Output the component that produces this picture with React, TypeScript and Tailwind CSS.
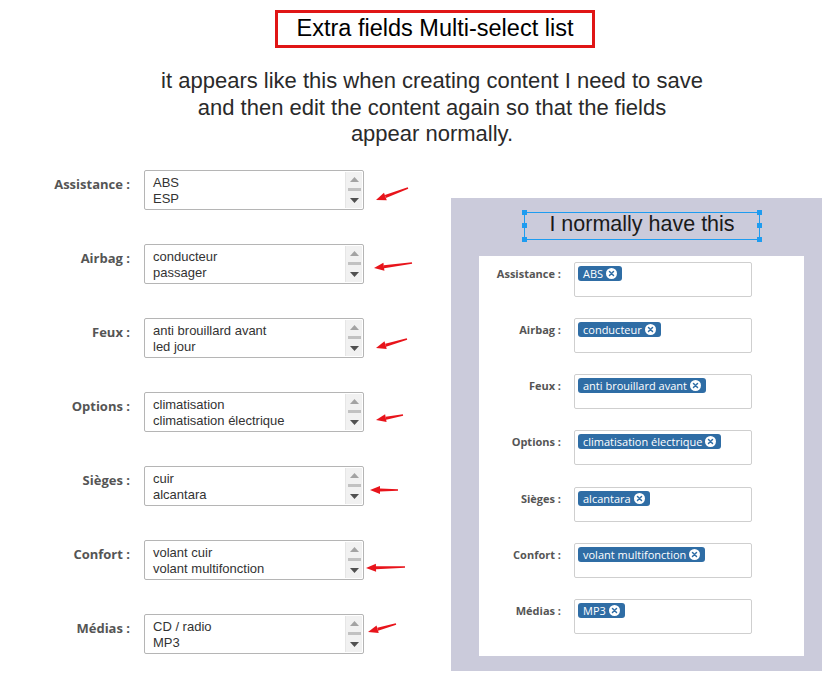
type Arrow = [number, number, number, number]

const leftRows: { label: string; options: string[]; arrow: Arrow }[] = [
  { label: 'Assistance :', options: ['ABS', 'ESP'], arrow: [264, 18, 232, 30] },
  { label: 'Airbag :', options: ['conducteur', 'passager'], arrow: [268, 19, 230, 24] },
  { label: 'Feux :', options: ['anti brouillard avant', 'led jour'], arrow: [263, 21, 232, 30] },
  { label: 'Options :', options: ['climatisation', 'climatisation électrique'], arrow: [259, 23, 232, 28] },
  { label: 'Sièges :', options: ['cuir', 'alcantara'], arrow: [254, 24, 226, 24] },
  { label: 'Confort :', options: ['volant cuir', 'volant multifonction'], arrow: [261, 27, 222, 28] },
  { label: 'Médias :', options: ['CD / radio', 'MP3'], arrow: [252, 10, 224, 18] },
]

const rightRows = [
  { label: 'Assistance :', tag: 'ABS' },
  { label: 'Airbag :', tag: 'conducteur' },
  { label: 'Feux :', tag: 'anti brouillard avant' },
  { label: 'Options :', tag: 'climatisation électrique' },
  { label: 'Sièges :', tag: 'alcantara' },
  { label: 'Confort :', tag: 'volant multifonction' },
  { label: 'Médias :', tag: 'MP3' },
]

function RedArrow({ a }: { a: Arrow }) {
  const [x1, y1, x2, y2] = a
  const len = Math.hypot(x2 - x1, y2 - y1)
  const ux = (x2 - x1) / len
  const uy = (y2 - y1) / len
  const px = -uy
  const py = ux
  const bx = x2 - ux * 10
  const by = y2 - uy * 10
  const shaft = [
    [x1 + px * 0.8, y1 + py * 0.8],
    [bx + px * 1.5, by + py * 1.5],
    [bx - px * 1.5, by - py * 1.5],
    [x1 - px * 0.8, y1 - py * 0.8],
  ]
  const head = [
    [x2, y2],
    [bx + px * 4, by + py * 4],
    [bx - px * 4, by - py * 4],
  ]
  const pts = (p: number[][]) => p.map((q) => q.join(',')).join(' ')
  return (
    <svg className="absolute left-0 top-0 w-[280px] h-[40px] overflow-visible pointer-events-none">
      <polygon points={pts(shaft)} fill="#e8141b" />
      <polygon points={pts(head)} fill="#e8141b" />
    </svg>
  )
}

function FakeMultiSelect({ options, arrow }: { options: string[]; arrow: Arrow }) {
  return (
    <div className="relative">
      <div className="flex w-[220px] h-[40px] border border-[#b5b5b5] rounded-[2px] bg-white">
        <div className="flex-1 pl-[8px] pt-[4px] text-[13px] leading-[16px] text-[#333] font-['Liberation_Sans',Arial,sans-serif]">
          {options.map((o) => (
            <div key={o}>{o}</div>
          ))}
        </div>
        <div className="w-[17px] bg-[#f1f1f1] border-l border-[#e6e6e6] flex flex-col items-center justify-between py-[5px] mr-[1px] my-[1px]">
          <svg width="9" height="5" viewBox="0 0 9 5">
            <polygon points="0,5 4.5,0 9,5" fill="#a3a3a3" />
          </svg>
          <div className="w-[13px] h-[3px] bg-[#c1c1c1]" />
          <svg width="9" height="5" viewBox="0 0 9 5">
            <polygon points="0,0 9,0 4.5,5" fill="#505050" />
          </svg>
        </div>
      </div>
      <RedArrow a={arrow} />
    </div>
  )
}

function Tag({ text }: { text: string }) {
  return (
    <span className="inline-flex items-center gap-[3px] h-[15px] px-[5px] rounded-[3px] bg-[#2f6da5] text-white text-[11px] leading-none font-['Open_Sans',sans-serif] font-medium">
      {text}
      <svg width="11" height="11" viewBox="0 0 12 12">
        <circle cx="6" cy="6" r="6" fill="#fff" />
        <path d="M3.8 3.8 L8.2 8.2 M8.2 3.8 L3.8 8.2" stroke="#2f6da5" strokeWidth="1.6" strokeLinecap="round" />
      </svg>
    </span>
  )
}

function Handle({ className }: { className: string }) {
  return <span className={`absolute w-[5px] h-[5px] bg-[#1e9cf0] ${className}`} />
}

export default function App() {
  return (
    <div className="w-[840px] h-[688px] bg-white overflow-hidden">
      <div className="pt-[10px] flex flex-col items-center">
        <div className="ml-[30px] w-[320px] h-[38px] border-[3px] border-[#e01616] flex items-center justify-center text-[23.5px] text-black font-['Liberation_Sans',Arial,sans-serif]">
          Extra fields Multi-select list
        </div>
        <p className="mt-[20px] ml-[24px] text-center text-[22px] leading-[26.5px] text-[#2a2a2a] font-['Liberation_Sans',Arial,sans-serif] font-light">
          it appears like this when creating content I need to save
          <br />
          and then edit the content again so that the fields
          <br />
          appear normally.
        </p>
      </div>

      <div className="mt-[22px] flex items-start">
        <div className="w-[451px] flex flex-col gap-[34px]">
          {leftRows.map((r) => (
            <div key={r.label} className="flex items-start">
              <div className="w-[130px] pt-[5px] text-right text-[13px] font-bold text-[#555] font-['Open_Sans',sans-serif]">
                {r.label}
              </div>
              <div className="ml-[14px]">
                <FakeMultiSelect options={r.options} arrow={r.arrow} />
              </div>
            </div>
          ))}
        </div>

        <div className="mt-[28px] w-[371px] h-[473px] bg-[#cbcbdb] pt-[14px] flex flex-col">
          <div className="ml-[73px] relative w-[236px] h-[28px] border border-[#1e9cf0] flex items-center justify-center pb-[3px] text-[21.5px] text-[#1a1a1a] font-['Liberation_Sans',Arial,sans-serif] font-light">
            I normally have this
            <Handle className="-left-[3px] -top-[3px]" />
            <Handle className="-right-[3px] -top-[3px]" />
            <Handle className="-left-[3px] -bottom-[3px]" />
            <Handle className="-right-[3px] -bottom-[3px]" />
            <Handle className="-left-[3px] top-[10px]" />
            <Handle className="-right-[3px] top-[10px]" />
          </div>
          <div className="mt-[16px] ml-[28px] w-[325px] h-[400px] bg-white pt-[6px] flex flex-col gap-[21.3px]">
            {rightRows.map((r) => (
              <div key={r.label} className="flex items-start">
                <div className="w-[82px] pt-[4px] text-right text-[11px] font-bold text-[#555] font-['Open_Sans',sans-serif]">
                  {r.label}
                </div>
                <div className="ml-[13px] w-[178px] h-[35px] border border-[#cfcfcf] rounded-[2px] pl-[3px] pt-[3px] flex items-start">
                  <Tag text={r.tag} />
                </div>
              </div>
            ))}
          </div>
        </div>
      </div>
    </div>
  )
}
